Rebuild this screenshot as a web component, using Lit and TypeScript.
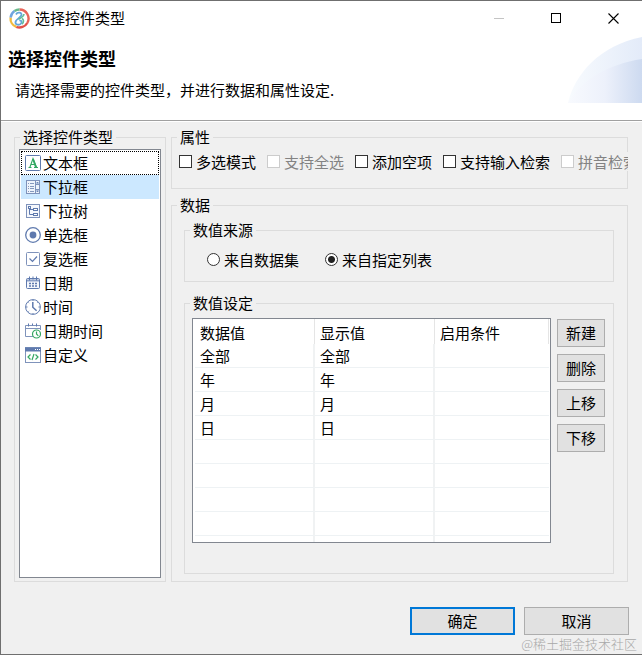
import { LitElement, html, css, svg, nothing } from "lit";
import { customElement, state } from "lit/decorators.js";
import { classMap } from "lit/directives/class-map.js";

const BLUE = "#5f7aae";
const GREEN = "#35a862";

const icons = {
  text: svg`<rect x="0.5" y="0.5" width="15" height="15" rx="1" fill="#fff" stroke="${BLUE}"/>
    <path d="M3.5 12.5h3M9 12.5h4M4.8 12.5L8 3.5l3.6 9M5.9 9.5h4.4" fill="none" stroke="${GREEN}" stroke-width="1.1"/><path d="M8 4l3 8.5" stroke="${GREEN}" stroke-width="1.8"/>`,
  combo: svg`<rect x="1.5" y="1.5" width="13" height="13" fill="#eef3fb" stroke="#7f93bb"/>
    <path d="M10.5 2v12M11 5.5h3.5M11 10.5h3.5" stroke="#7f93bb"/>
    <path d="M3 4.5h1M5 4.5h4M3 7.5h1M5 7.5h4M3 9.5h1M5 9.5h4M3 12.5h1M5 12.5h4" stroke="#8598bd"/>
    <path d="M11.5 4.2L12.5 3l1 1.2zM11.5 11.8l1 1.2 1-1.2z" fill="${BLUE}" stroke="${BLUE}" stroke-width=".6"/>`,
  tree: svg`<rect x="1.5" y="1.5" width="13" height="13" fill="#f6f8fc" stroke="#7f93bb"/>
    <path d="M4.5 5v6.5H8M4.5 6.5H8" fill="none" stroke="${BLUE}"/>
    <rect x="3.5" y="3.5" width="2" height="2" fill="#fff" stroke="${BLUE}"/>
    <rect x="8.5" y="5.5" width="4" height="2" fill="#fff" stroke="${BLUE}"/>
    <rect x="8.5" y="10.5" width="4" height="2" fill="#fff" stroke="${BLUE}"/>`,
  radio: svg`<circle cx="8" cy="8" r="7.3" fill="#fff" stroke="${BLUE}" stroke-width="1.3"/><circle cx="8" cy="8" r="3.4" fill="${BLUE}"/>`,
  check: svg`<rect x="1.5" y="1.5" width="13" height="13" rx="1" fill="#fff" stroke="#7f93bb"/>
    <path d="M4.5 7.5l3 3 4.5-5" fill="none" stroke="${BLUE}" stroke-width="1.2"/>`,
  date: svg`<rect x="1.5" y="3.5" width="13" height="10" rx="1" fill="#f4f7fc" stroke="${BLUE}"/>
    <path d="M2 5.5h12" stroke="#8ea1c8" stroke-width="2"/><path d="M4.5 1.5v4M8 1.5v3M11.5 1.5v4" stroke="${BLUE}"/>
    <path d="M4 8.5h2M7 8.5h2M10 8.5h2M4 11h2M7 11h2M10 11h2" stroke="${BLUE}" stroke-width="1.3"/>`,
  time: svg`<circle cx="8" cy="8" r="7.4" fill="#fff" stroke="${BLUE}"/>
    <path d="M7.8 3v5.2l3.8 3.6" fill="none" stroke="${BLUE}" stroke-width="1.5"/>
    <path d="M8 1v1M1 8h1.5M13.5 8H15M8 14v1M3.5 3.5l.6.6M12 4l.6-.6M3.5 12.5l.6-.6" stroke="${BLUE}"/>`,
  datetime: svg`<path d="M8 13.500H.5v-11h15V7" fill="#fff" stroke="#7f93bb"/><path d="M.5 5.500h15" stroke="#7f93bb"/>
    <path d="M3.5 .5v3M7.500 .5v2M11.500 .5v3" stroke="${BLUE}"/>
    <circle cx="11.500" cy="11" r="4" fill="#fff" stroke="${GREEN}" stroke-width="1.200"/><path d="M11.500 8.500V11l1.800 1.800" fill="none" stroke="${GREEN}" stroke-width="1.200"/>`,
  custom: svg`<rect x="0.5" y="0.5" width="15" height="15" fill="#fff" stroke="#7f93bb"/>
    <path d="M0 2.5h16" stroke="${BLUE}" stroke-width="4"/><path d="M10 2.5h1M12 2.5h1M14 2.5h1" stroke="#fff"/>
    <path d="M5.5 7.5L3 10l2.5 2.5M10.5 7.5L13 10l-2.5 2.5M9 7l-2 6" fill="none" stroke="${GREEN}" stroke-width="1.2"/>`,
};

const TYPES: { icon: keyof typeof icons; label: string }[] = [
  { icon: "text", label: "文本框" },
  { icon: "combo", label: "下拉框" },
  { icon: "tree", label: "下拉树" },
  { icon: "radio", label: "单选框" },
  { icon: "check", label: "复选框" },
  { icon: "date", label: "日期" },
  { icon: "time", label: "时间" },
  { icon: "datetime", label: "日期时间" },
  { icon: "custom", label: "自定义" },
];

const OPTIONS = [
  { label: "多选模式", disabled: false },
  { label: "支持全选", disabled: true },
  { label: "添加空项", disabled: false },
  { label: "支持输入检索", disabled: false },
  { label: "拼音检索", disabled: true },
];

const SOURCES = ["来自数据集", "来自指定列表"];
const ROWS = ["全部", "年", "月", "日", "", "", "", ""];
const ACTIONS = ["新建", "删除", "上移", "下移"];

@customElement("app-root")
export class AppRoot extends LitElement {
  @state() private selected = 1;
  @state() private source = 1;

  static styles = css`
    :host {
      display: block;
      background: #f0f0f0;
      color: #000;
      font: 15px/21px "Noto Sans CJK SC", "Liberation Sans", sans-serif;
    }
    * { box-sizing: border-box; }
    .dialog {
      position: relative;
      display: flex;
      flex-direction: column;
      min-height: calc(100vh - 1px);
      border: 1px solid #6f6f6f;
      border-right: 0;
      overflow: hidden;
    }
    .head {
      position: relative;
      height: 120px;
      background: #fff;
      border-bottom: 1px solid #a0a0a0;
    }
    .swoosh { position: absolute; right: 0; top: 36px; }
    .titlebar { display: flex; align-items: center; height: 35px; padding-left: 8px; }
    .logo { margin-right: 5px; }
    .caption { flex: 1; padding-bottom: 2px; }
    .win {
      display: flex;
      align-items: center;
      justify-content: center;
      width: 57px;
      height: 34px;
      padding: 0;
      border: 0;
      background: none;
    }
    h1 { margin: 9px 0 0 7px; font-size: 18px; line-height: 26px; font-weight: 700; }
    .desc { margin: 8px 0 0 14px; }
    .body {
      flex: 1;
      display: grid;
      grid-template-columns: 152px minmax(0, 1fr);
      gap: 5px;
      padding: 5px 14px 0 13px;
      border-top: 1px solid #fff;
    }
    .side { display: flex; flex-direction: column; gap: 6px; }
    fieldset {
      min-width: 0;
      margin: 0;
      padding: 0;
      border: 1px solid #dcdcdc;
    }
    legend { margin-left: 5px; padding: 0 3px; height: 21px; line-height: 19px; }
    .types { display: flex; flex-direction: column; }
    .list {
      flex: 1;
      margin: 1px 4px 3px;
      padding: 1px;
      list-style: none;
      background: #fff;
      border: 1px solid #828790;
    }
    .item {
      display: flex;
      align-items: center;
      gap: 2px;
      height: 24px;
      padding-left: 4px;
    }
    .item span { padding-bottom: 2px; }
    .item.on { background: #cce8ff; }
    .item.focus { outline: 1px dotted #000; outline-offset: -1px; }
    .props { height: 62px; }
    .row { display: flex; height: 19px; }
    .checks {
      gap: 11px;
      margin: 4px -1px 0 7px;
      background: #f0f0f0;
      overflow: hidden;
    }
    .choice { display: flex; flex: none; align-items: center; gap: 4px; white-space: nowrap; }
    .choice.off { color: #838383; }
    input {
      appearance: none;
      width: 13px;
      height: 13px;
      margin: 0;
      background: #fff;
      border: 1px solid #333;
    }
    input:disabled { border-color: #ccc; }
    input[type="checkbox"]:checked { background: #333; box-shadow: inset 0 0 0 2px #fff; }
    input[type="radio"] { border-radius: 50%; }
    input[type="radio"]:checked { background: radial-gradient(circle, #222 3px, #fff 4px); }
    .data { flex: 1; display: flex; flex-direction: column; }
    .panels { flex: 1; display: flex; flex-direction: column; gap: 11px; margin: 4px 13px 7px 12px; }
    .source { height: 62px; }
    .sources { gap: 26px; margin: 9px 0 0 22px; }
    .values { flex: 1; display: flex; flex-direction: column; }
    .editor { flex: 1; display: flex; gap: 6px; margin: 4px 8px 30px 7px; }
    .grid { flex: 1; display: grid; min-width: 0; background: #fff; border: 1px solid #828790; padding: 0 1px 0 2px; }
    table { width: 100%; height: 100%; table-layout: fixed; border-collapse: separate; border-spacing: 0; }
    .col { width: 120px; }
    th, td {
      height: 24px;
      padding: 0 5px;
      text-align: left;
      font-weight: 400;
      border-bottom: 1px solid #eef2f4;
      border-right: 2px solid #f0f2f3;
    }
    th { height: 25px; padding-top: 2px; border-bottom: 0; border-right: 1px solid #e5e5e5; }
    td:last-child { border-right: 0; }
    .tail td { height: auto; border-bottom: 0; padding: 0; }
    .actions { display: flex; flex-direction: column; gap: 7px; padding-top: 1px; }
    .btn {
      width: 48px;
      height: 28px;
      padding: 0 0 2px;
      font: inherit;
      color: #000;
      background: #e1e1e1;
      border: 1px solid #adadad;
    }
    .foot { display: flex; justify-content: flex-end; gap: 9px; padding: 25px 13px 19px; }
    .wide { width: 105px; }
    .primary { border: 2px solid #0078d7; }
    .mark {
      position: absolute;
      right: 5px;
      bottom: 0;
      color: #a8a8a8;
      font-size: 13px;
      font-weight: 300;
      pointer-events: none;
    }
  `;

  render() {
    return html`
      <main class="dialog">
        <header class="head">
          <svg class="swoosh" width="74" height="67" viewBox="0 0 74 67" aria-hidden="true">
            <defs>
              <linearGradient id="a"><stop offset="0" stop-color="#f8fbfe"/><stop offset="1" stop-color="#e3ebf9"/></linearGradient>
              <linearGradient id="b"><stop offset="0" stop-color="#f8fafe"/><stop offset=".5" stop-color="#edf1fb"/><stop offset="1" stop-color="#cddaf0"/></linearGradient>
            </defs>
            <path d="M0 66C6 38 32 8 74 0V66z" fill="url(#a)"/>
            <path d="M0 66C12 44 40 27 74 22V66z" fill="url(#b)"/>
          </svg>
          <div class="titlebar">
            <svg class="logo" width="21" height="21" viewBox="0 0 21 21" aria-hidden="true">
              <g fill="none" stroke-width="2.4">
                <path d="M10.5 1.5a9 9 0 0 1 7.8 13.5" stroke="#e8655a"/>
                <path d="M18.3 15a9 9 0 0 1-11 3.9" stroke="#e2524a"/>
                <path d="M7.3 18.9A9 9 0 0 1 1.6 9.5" stroke="#f0bb3f"/>
                <path d="M1.6 9.5A9 9 0 0 1 5.5 3" stroke="#6fa5e0"/>
                <path d="M5.5 3a9 9 0 0 1 5-1.5" stroke="#66b98a"/>
              </g>
              <path d="M7 6.500c1.500-3 6-2 5.500 .5S7 11 6.500 14s4 3.500 5.500 1.500 0-3.500-1.500-2.500" fill="none" stroke="#64a6da" stroke-width="1.800"/>
              <path d="M15 6c0 3.500-3 3-5.500 5.500M13 10.500c2 1 2 4 0 5.500" fill="none" stroke="#62bd98" stroke-width="1.600"/>
            </svg>
            <span class="caption">选择控件类型</span>
            <button class="win" aria-label="最小化" disabled>
              <svg width="11" height="11"><path d="M0 5.500h10" stroke="#c4c4c4"/></svg>
            </button>
            <button class="win" aria-label="最大化">
              <svg width="11" height="11"><rect x=".5" y=".5" width="9" height="9" fill="none" stroke="#000"/></svg>
            </button>
            <button class="win" aria-label="关闭">
              <svg width="11" height="11"><path d="M.5 .5l10 10M10.500 .5l-10 10" stroke="#000" stroke-width="1.100"/></svg>
            </button>
          </div>
          <h1>选择控件类型</h1>
          <p class="desc">请选择需要的控件类型，并进行数据和属性设定.</p>
        </header>

        <div class="body">
          <fieldset class="types">
            <legend>选择控件类型</legend>
            <ul class="list" role="listbox" aria-label="选择控件类型">
              ${TYPES.map(
                (t, i) => html`<li
                  role="option"
                  aria-selected=${i === this.selected}
                  class=${classMap({ item: true, on: i === this.selected, focus: i === 0 })}
                  @click=${() => (this.selected = i)}
                >
                  <svg width="16" height="16" viewBox="0 0 16 16" aria-hidden="true">${icons[t.icon]}</svg>
                  <span>${t.label}</span>
                </li>`
              )}
            </ul>
          </fieldset>

          <div class="side">
            <fieldset class="props">
              <legend>属性</legend>
              <div class="row checks">
                ${OPTIONS.map(
                  (o) => html`<label class=${classMap({ choice: true, off: o.disabled })}
                    ><input type="checkbox" ?disabled=${o.disabled} />${o.label}</label
                  >`
                )}
              </div>
            </fieldset>

            <fieldset class="data">
              <legend>数据</legend>
              <div class="panels">
                <fieldset class="source">
                  <legend>数值来源</legend>
                  <div class="row sources">
                    ${SOURCES.map(
                      (s, i) => html`<label class="choice"
                        ><input type="radio" name="source" .checked=${i === this.source} @change=${() => (this.source = i)} />${s}</label
                      >`
                    )}
                  </div>
                </fieldset>
                <fieldset class="values">
                  <legend>数值设定</legend>
                  <div class="editor">
                    <div class="grid">
                      <table>
                        <colgroup><col class="col" /><col class="col" /><col /></colgroup>
                        <thead>
                          <tr><th>数据值</th><th>显示值</th><th>启用条件</th></tr>
                        </thead>
                        <tbody>
                          ${ROWS.map((r) => html`<tr><td>${r || nothing}</td><td>${r || nothing}</td><td></td></tr>`)}
                          <tr class="tail"><td></td><td></td><td></td></tr>
                        </tbody>
                      </table>
                    </div>
                    <div class="actions">${ACTIONS.map((a) => html`<button class="btn">${a}</button>`)}</div>
                  </div>
                </fieldset>
              </div>
            </fieldset>
          </div>
        </div>

        <footer class="foot">
          <button class="btn wide primary">确定</button>
          <button class="btn wide">取消</button>
        </footer>
        <span class="mark">@稀土掘金技术社区</span>
      </main>
    `;
  }
}
